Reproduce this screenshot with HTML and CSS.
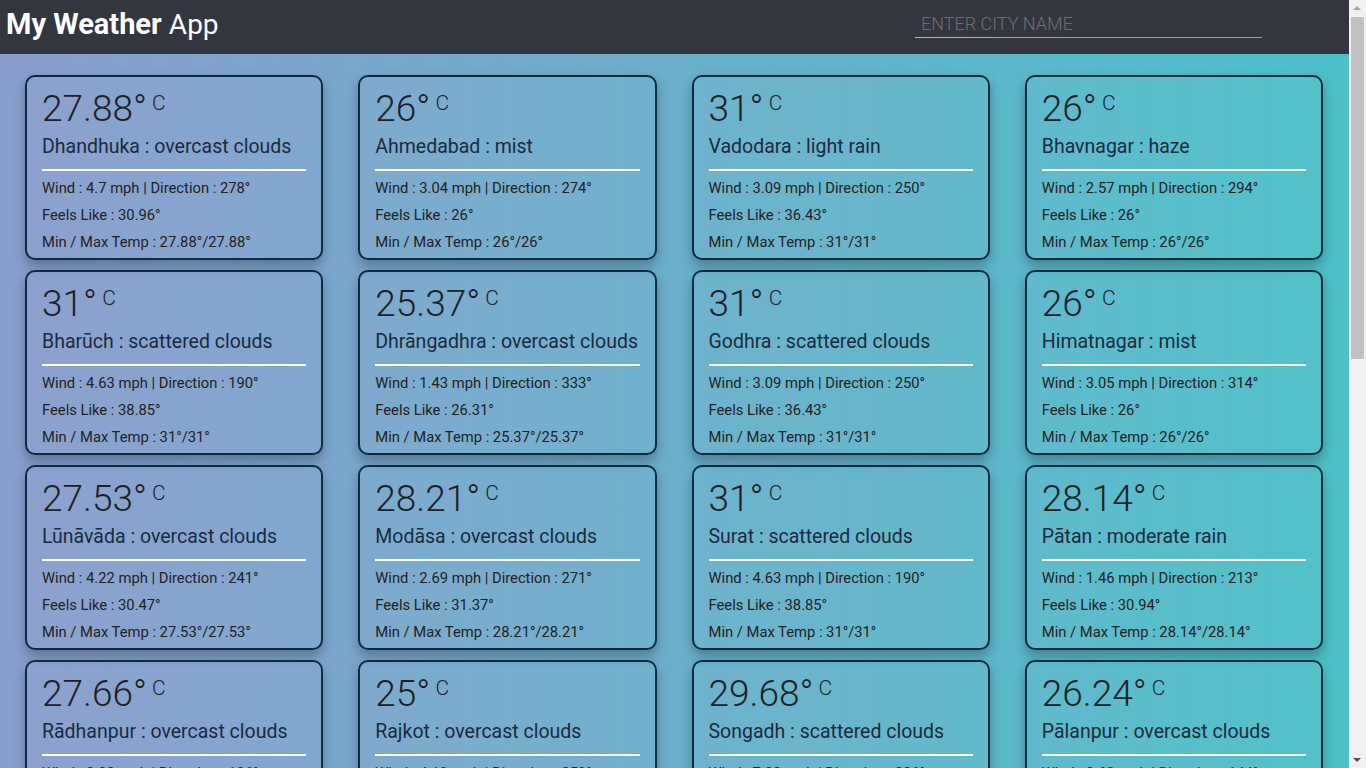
FILE: index.html
```html
<!DOCTYPE html>
<html lang="en">
<head>
<meta charset="utf-8">
<title>My Weather App</title>
<link rel="stylesheet" href="styles.css">
</head>
<body>
<div class="page">
<header class="topbar">
  <h1 class="brand"><strong>My Weather</strong> <span>App</span></h1>
  <div class="search"><input type="text" placeholder="ENTER CITY NAME"></div>
</header>
<main class="grid">
  <div class="card"><div class="temp">27.88°<sup> C</sup></div><div class="city">Dhandhuka : overcast clouds</div><hr><p>Wind : 4.7 mph | Direction : 278°</p><p>Feels Like : 30.96°</p><p>Min / Max Temp : 27.88°/27.88°</p></div>
  <div class="card"><div class="temp">26°<sup> C</sup></div><div class="city">Ahmedabad : mist</div><hr><p>Wind : 3.04 mph | Direction : 274°</p><p>Feels Like : 26°</p><p>Min / Max Temp : 26°/26°</p></div>
  <div class="card"><div class="temp">31°<sup> C</sup></div><div class="city">Vadodara : light rain</div><hr><p>Wind : 3.09 mph | Direction : 250°</p><p>Feels Like : 36.43°</p><p>Min / Max Temp : 31°/31°</p></div>
  <div class="card"><div class="temp">26°<sup> C</sup></div><div class="city">Bhavnagar : haze</div><hr><p>Wind : 2.57 mph | Direction : 294°</p><p>Feels Like : 26°</p><p>Min / Max Temp : 26°/26°</p></div>

  <div class="card"><div class="temp">31°<sup> C</sup></div><div class="city">Bharūch : scattered clouds</div><hr><p>Wind : 4.63 mph | Direction : 190°</p><p>Feels Like : 38.85°</p><p>Min / Max Temp : 31°/31°</p></div>
  <div class="card"><div class="temp">25.37°<sup> C</sup></div><div class="city">Dhrāngadhra : overcast clouds</div><hr><p>Wind : 1.43 mph | Direction : 333°</p><p>Feels Like : 26.31°</p><p>Min / Max Temp : 25.37°/25.37°</p></div>
  <div class="card"><div class="temp">31°<sup> C</sup></div><div class="city">Godhra : scattered clouds</div><hr><p>Wind : 3.09 mph | Direction : 250°</p><p>Feels Like : 36.43°</p><p>Min / Max Temp : 31°/31°</p></div>
  <div class="card"><div class="temp">26°<sup> C</sup></div><div class="city">Himatnagar : mist</div><hr><p>Wind : 3.05 mph | Direction : 314°</p><p>Feels Like : 26°</p><p>Min / Max Temp : 26°/26°</p></div>

  <div class="card"><div class="temp">27.53°<sup> C</sup></div><div class="city">Lūnāvāda : overcast clouds</div><hr><p>Wind : 4.22 mph | Direction : 241°</p><p>Feels Like : 30.47°</p><p>Min / Max Temp : 27.53°/27.53°</p></div>
  <div class="card"><div class="temp">28.21°<sup> C</sup></div><div class="city">Modāsa : overcast clouds</div><hr><p>Wind : 2.69 mph | Direction : 271°</p><p>Feels Like : 31.37°</p><p>Min / Max Temp : 28.21°/28.21°</p></div>
  <div class="card"><div class="temp">31°<sup> C</sup></div><div class="city">Surat : scattered clouds</div><hr><p>Wind : 4.63 mph | Direction : 190°</p><p>Feels Like : 38.85°</p><p>Min / Max Temp : 31°/31°</p></div>
  <div class="card"><div class="temp">28.14°<sup> C</sup></div><div class="city">Pātan : moderate rain</div><hr><p>Wind : 1.46 mph | Direction : 213°</p><p>Feels Like : 30.94°</p><p>Min / Max Temp : 28.14°/28.14°</p></div>

  <div class="card"><div class="temp">27.66°<sup> C</sup></div><div class="city">Rādhanpur : overcast clouds</div><hr><p>Wind : 3.03 mph | Direction : 106°</p><p>Feels Like : 30.71°</p><p>Min / Max Temp : 27.66°/27.66°</p></div>
  <div class="card"><div class="temp">25°<sup> C</sup></div><div class="city">Rajkot : overcast clouds</div><hr><p>Wind : 4.19 mph | Direction : 259°</p><p>Feels Like : 25.93°</p><p>Min / Max Temp : 25°/25°</p></div>
  <div class="card"><div class="temp">29.68°<sup> C</sup></div><div class="city">Songadh : scattered clouds</div><hr><p>Wind : 7.08 mph | Direction : 226°</p><p>Feels Like : 35.12°</p><p>Min / Max Temp : 29.68°/29.68°</p></div>
  <div class="card"><div class="temp">26.24°<sup> C</sup></div><div class="city">Pālanpur : overcast clouds</div><hr><p>Wind : 3.62 mph | Direction : 144°</p><p>Feels Like : 26.24°</p><p>Min / Max Temp : 26.24°/26.24°</p></div>

  <div class="card"><div class="temp">27.1°<sup> C</sup></div><div class="city">Jāmnagar : broken clouds</div><hr><p>Wind : 5.12 mph | Direction : 240°</p><p>Feels Like : 30.2°</p><p>Min / Max Temp : 27.1°/27.1°</p></div>
  <div class="card"><div class="temp">26.5°<sup> C</sup></div><div class="city">Jūnāgadh : light rain</div><hr><p>Wind : 3.4 mph | Direction : 231°</p><p>Feels Like : 28.9°</p><p>Min / Max Temp : 26.5°/26.5°</p></div>
  <div class="card"><div class="temp">28.02°<sup> C</sup></div><div class="city">Porbandar : overcast clouds</div><hr><p>Wind : 6.21 mph | Direction : 252°</p><p>Feels Like : 32.14°</p><p>Min / Max Temp : 28.02°/28.02°</p></div>
  <div class="card"><div class="temp">30°<sup> C</sup></div><div class="city">Navsāri : haze</div><hr><p>Wind : 3.36 mph | Direction : 200°</p><p>Feels Like : 35.6°</p><p>Min / Max Temp : 30°/30°</p></div>

  <div class="card"><div class="temp">29.4°<sup> C</sup></div><div class="city">Valsād : scattered clouds</div><hr><p>Wind : 4.01 mph | Direction : 215°</p><p>Feels Like : 34.2°</p><p>Min / Max Temp : 29.4°/29.4°</p></div>
  <div class="card"><div class="temp">28.9°<sup> C</sup></div><div class="city">Bhuj : clear sky</div><hr><p>Wind : 5.5 mph | Direction : 260°</p><p>Feels Like : 31.8°</p><p>Min / Max Temp : 28.9°/28.9°</p></div>
  <div class="card"><div class="temp">27°<sup> C</sup></div><div class="city">Ānand : mist</div><hr><p>Wind : 2.24 mph | Direction : 270°</p><p>Feels Like : 30.1°</p><p>Min / Max Temp : 27°/27°</p></div>
  <div class="card"><div class="temp">27.35°<sup> C</sup></div><div class="city">Nadiād : overcast clouds</div><hr><p>Wind : 2.81 mph | Direction : 268°</p><p>Feels Like : 30.55°</p><p>Min / Max Temp : 27.35°/27.35°</p></div>

  <div class="card"><div class="temp">26.8°<sup> C</sup></div><div class="city">Mahesāna : overcast clouds</div><hr><p>Wind : 2.95 mph | Direction : 287°</p><p>Feels Like : 29.4°</p><p>Min / Max Temp : 26.8°/26.8°</p></div>
  <div class="card"><div class="temp">26°<sup> C</sup></div><div class="city">Gāndhīnagar : mist</div><hr><p>Wind : 3.04 mph | Direction : 274°</p><p>Feels Like : 26°</p><p>Min / Max Temp : 26°/26°</p></div>
  <div class="card"><div class="temp">27.7°<sup> C</sup></div><div class="city">Morvi : broken clouds</div><hr><p>Wind : 3.9 mph | Direction : 265°</p><p>Feels Like : 30.8°</p><p>Min / Max Temp : 27.7°/27.7°</p></div>
  <div class="card"><div class="temp">26.9°<sup> C</sup></div><div class="city">Surendranagar : overcast clouds</div><hr><p>Wind : 1.9 mph | Direction : 310°</p><p>Feels Like : 29.6°</p><p>Min / Max Temp : 26.9°/26.9°</p></div>

  <div class="card"><div class="temp">27.2°<sup> C</sup></div><div class="city">Amreli : overcast clouds</div><hr><p>Wind : 3.55 mph | Direction : 246°</p><p>Feels Like : 30.3°</p><p>Min / Max Temp : 27.2°/27.2°</p></div>
  <div class="card"><div class="temp">27.45°<sup> C</sup></div><div class="city">Botād : scattered clouds</div><hr><p>Wind : 2.7 mph | Direction : 280°</p><p>Feels Like : 30.6°</p><p>Min / Max Temp : 27.45°/27.45°</p></div>
  <div class="card"><div class="temp">28.6°<sup> C</sup></div><div class="city">Dāhod : light rain</div><hr><p>Wind : 4.4 mph | Direction : 238°</p><p>Feels Like : 32.9°</p><p>Min / Max Temp : 28.6°/28.6°</p></div>
  <div class="card"><div class="temp">29.1°<sup> C</sup></div><div class="city">Vyāra : scattered clouds</div><hr><p>Wind : 3.2 mph | Direction : 205°</p><p>Feels Like : 34.4°</p><p>Min / Max Temp : 29.1°/29.1°</p></div>
</main>
</div>
<div class="scrollbar" aria-hidden="true">
  <div class="sb-btn sb-up"></div>
  <div class="sb-track"><div class="sb-thumb"></div></div>
  <div class="sb-btn sb-down"></div>
</div>
</body>
</html>
```

FILE: styles.css
```css
* { box-sizing: border-box; }

html, body {
  margin: 0;
  padding: 0;
}

body {
  font-family: Roboto, "Liberation Sans", sans-serif;
  color: #212529;
  background: #f1f1f1;
}

.page {
  margin-right: 17px;
  background: linear-gradient(to right, #8a9dcd 0%, #4bc0c8 100%);
}

/* fake classic scrollbar lying over the right edge */
.scrollbar {
  position: fixed;
  top: 0;
  right: 0;
  width: 17px;
  height: 100vh;
  background: #f1f1f1;
  display: flex;
  flex-direction: column;
}

.sb-btn {
  height: 17px;
  flex: none;
  position: relative;
}

.sb-up::after,
.sb-down::after {
  content: "";
  position: absolute;
  left: 4px;
  border-left: 4px solid transparent;
  border-right: 4px solid transparent;
}

.sb-up::after {
  top: 6px;
  border-bottom: 4px solid #a3a3a3;
}

.sb-down::after {
  top: 7px;
  border-top: 4px solid #505050;
}

.sb-track {
  flex: 1;
  padding: 0 2px;
}

.sb-thumb {
  height: 342px;
  background: #c1c1c1;
}

.topbar {
  height: 54px;
  background: #33363f;
  display: flex;
  align-items: center;
  justify-content: space-between;
  padding: 0 87px 0 6px;
}

.brand {
  margin: 0;
  font-size: 29px;
  font-weight: 400;
  color: #fff;
  line-height: 1;
  padding-bottom: 6px;
}

.brand strong {
  font-weight: 700;
}

.brand span {
  font-size: 28px;
}

.search {
  width: 347px;
  padding-bottom: 1px;
  background: linear-gradient(to right, #f7a95c, #c47bc9 50%, #4bc0c8) bottom / 100% 1px no-repeat;
  margin-bottom: 5px;
}

.search input {
  display: block;
  width: 100%;
  border: 0;
  outline: 0;
  background: transparent;
  font-family: Roboto, "Liberation Sans", sans-serif;
  font-size: 18px;
  font-weight: 300;
  color: #ddd;
  padding: 0 6px 2px;
  height: 26px;
}

.search input::placeholder {
  color: #6f6f6f;
}

.grid {
  display: grid;
  grid-template-columns: repeat(4, minmax(0, 1fr));
  column-gap: 35px;
  row-gap: 10px;
  padding: 21px 26px 23px 25px;
}

.card {
  height: 185px;
  min-width: 0;
  border: 2px solid #0c2b40;
  border-radius: 10px;
  padding: 10px 15px 0;
  background: rgba(255, 255, 255, 0.04);
  box-shadow: 0 6px 12px rgba(0, 0, 0, 0.28);
}

.temp {
  font-size: 37px;
  font-weight: 300;
  line-height: 44px;
  color: #1d2126;
  white-space: nowrap;
}

.temp sup {
  font-size: 21px;
  vertical-align: top;
  position: relative;
  top: -6px;
}

.city {
  font-size: 19.5px;
  font-weight: 400;
  line-height: 30px;
  color: #1b2b3e;
  margin-top: 1px;
  white-space: nowrap;
}

.card hr {
  border: 0;
  height: 2px;
  background: #fff;
  margin: 7px 0 4px;
}

.card p {
  margin: 0;
  font-size: 14.75px;
  line-height: 27px;
  color: #222;
  white-space: nowrap;
}
```
